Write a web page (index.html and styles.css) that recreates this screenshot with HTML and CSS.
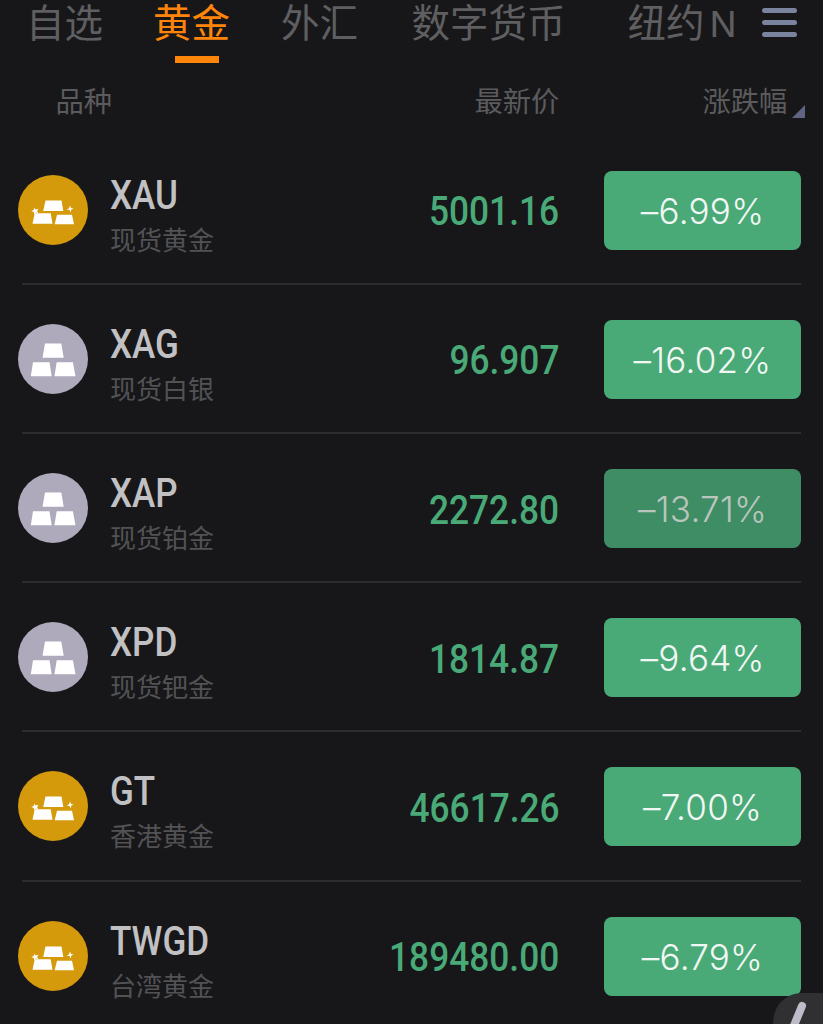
FILE: index.html
```html
<!DOCTYPE html>
<html lang="zh-CN">
<head>
<meta charset="utf-8">
<title>黄金行情</title>
<link rel="stylesheet" href="styles.css">
</head>
<body>
<svg class="defs" width="0" height="0">
  <symbol id="gold" viewBox="0 0 70 70">
    <circle cx="35" cy="35" r="35" fill="#d49a0c"/>
    <g fill="#fff"><path d="M27.500 25.500h16l1.800 10.500H25.200zM16.700 38.300h16l1.800 10.500H14.500zM39 39.800h15l2 9.500H36.700z"/><path d="M16 32.500l1.600 2 3-.7-1.500 2.300 1.400 2.400-2.600-1-1.800 2-.3-2.600-2.600-1 2.600-.9zM52 30.500l1 2.500 2.700.4-2.400 1.200-.5 2.900-1.200-2.400-2.800-.4 2.300-1.400z"/></g>
  </symbol>
  <symbol id="silver" viewBox="0 0 70 70">
    <circle cx="35" cy="35" r="35" fill="#aeaabb"/>
    <path fill="#fff" d="M27 19.500h16.300l2.400 14.300H24.500zM15 38.300h16.500l2.200 14H12.800zM38.700 38.300h16.200l2.600 14H36.400z"/>
  </symbol>
</svg>
<main class="app">
  <nav class="tabs">
    <a class="tab">自选</a><a class="tab tab-active">黄金</a><a class="tab tab-fx">外汇</a><a class="tab tab-crypto">数字货币</a><a class="tab tab-ny">纽约<span class="latin">N</span></a>
    <div class="menu"><i></i><i></i><i></i></div>
  </nav>
  <header class="heads"><span class="h-name">品种</span><span class="h-price">最新价</span><span class="h-change">涨跌幅</span><svg class="sort" viewBox="0 0 14 14"><path d="M14 0v14H0z" fill="#5f6482"/></svg></header>
  <section class="list">
    <article class="row"><svg class="coin"><use href="#gold"/></svg><div class="name"><b class="code">XAU</b><span class="sub">现货黄金</span></div><div class="price"><span>5001.16</span></div><div class="badge"><span>–6.99%</span></div></article>
    <article class="row"><svg class="coin"><use href="#silver"/></svg><div class="name"><b class="code">XAG</b><span class="sub">现货白银</span></div><div class="price"><span>96.907</span></div><div class="badge"><span>–16.02%</span></div></article>
    <article class="row"><svg class="coin"><use href="#silver"/></svg><div class="name"><b class="code">XAP</b><span class="sub">现货铂金</span></div><div class="price"><span>2272.80</span></div><div class="badge badge-dim"><span>–13.71%</span></div></article>
    <article class="row"><svg class="coin"><use href="#silver"/></svg><div class="name"><b class="code">XPD</b><span class="sub">现货钯金</span></div><div class="price"><span>1814.87</span></div><div class="badge"><span>–9.64%</span></div></article>
    <article class="row"><svg class="coin"><use href="#gold"/></svg><div class="name"><b class="code">GT</b><span class="sub">香港黄金</span></div><div class="price"><span>46617.26</span></div><div class="badge"><span>–7.00%</span></div></article>
    <article class="row"><svg class="coin"><use href="#gold"/></svg><div class="name"><b class="code">TWGD</b><span class="sub">台湾黄金</span></div><div class="price"><span>189480.00</span></div><div class="badge"><span>–6.79%</span></div></article>
  </section>
  <svg class="edit" viewBox="0 0 50 31"><path d="M0 31C0 13 12 0 30 0H50V31z" fill="#303033"/><path d="M29 13L20 35" stroke="#bdbcc8" stroke-width="8" stroke-linecap="round"/></svg>
</main>
</body>
</html>
```
FILE: styles.css
```css
* { box-sizing: border-box; }
body { margin: 0; background: #17171a; font-family: "Noto Sans CJK SC", sans-serif; }
.defs { position: absolute; }
.app { position: relative; width: 823px; height: 1024px; overflow: hidden; background: #17171a; }
.tabs { display: flex; height: 66px; padding-left: 26px; }
.tab { flex: none; font-size: 38.5px; line-height: 40px; font-weight: 400; color: #5f5f61; white-space: nowrap; }
.tab-active { display: flex; flex-direction: column; margin-left: 50px; color: #ff850a; }
.tab-active::after { content: ""; width: 44px; height: 7px; margin: 16px 0 0 22px; background: #ff850a; }
.tab-fx { margin-left: 51px; }
.tab-crypto { margin-left: 53.500px; }
.tab-ny { margin-left: 62px; }
.latin { font-family: Inter, sans-serif; font-size: 36px; font-weight: 400; margin-left: 5px; }
.menu { display: flex; flex-direction: column; gap: 7px; margin: 8px 26px 0 auto; }
.menu i { width: 35px; height: 5px; border-radius: 3px; background: #7b849f; }
.heads { display: flex; height: 69.600px; padding: 14px 18px 0 55.500px; font-size: 28.300px; line-height: 40px; font-weight: 400; color: #5b5b5d; }
.h-name { width: 419px; }
.h-price { width: 228px; }
.sort { width: 13px; height: 13px; margin: 25px 0 0 auto; }
.row { display: flex; align-items: center; height: 149.2px; margin: 0 22px; border-bottom: 2px solid #2d2d30; }
.row:last-child { border-bottom-color: transparent; }
.coin { flex: none; width: 70px; height: 70px; margin: 1px 0 0 -4px; }
.name { display: flex; flex-direction: column; width: 240px; margin: 12px 0 0 21.500px; }
.code { height: 45px; font: 500 40px/45px Roboto, sans-serif; color: #c1c1c3; transform: scaleX(.875); transform-origin: left; }
.sub { height: 39px; padding-left: .5px; margin-top: 1px; font-size: 26px; line-height: 40px; font-weight: 400; color: #525255; }
.price { display: flex; justify-content: flex-end; flex: 1; margin: 4px 44.500px 0 0; font: 500 41.500px/48px Roboto, sans-serif; color: #49aa78; }
.price span { transform: scaleX(.85); transform-origin: right; }
.badge { display: flex; flex: none; align-items: center; justify-content: center; width: 197px; height: 79px; margin: 2px 0 0; padding-top: 1px; border-radius: 8px; background: #49aa78; color: #f2f7f3; font: 300 35px/48px Inter, sans-serif; font-feature-settings: "calt" 0; letter-spacing: .25px; }
.badge-dim { background: #3f8d65; color: #b9c5bd; }
.edit { position: absolute; right: 0; bottom: 0; width: 50px; height: 31px; }
```
